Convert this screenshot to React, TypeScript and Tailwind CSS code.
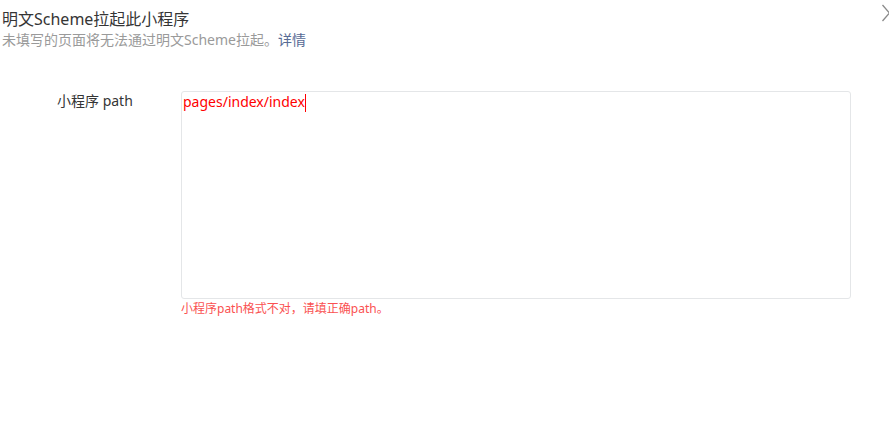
import React from "react";

export default function App() {
  const font = { fontFamily: '"Noto Sans", "Noto Sans CJK SC", sans-serif' };
  return (
    <div className="w-[889px] h-[427px] bg-white overflow-hidden" style={font}>
      <div className="flex justify-between pl-[2px] pt-[8px]">
        <div className="flex flex-col">
          <div className="text-[16px] leading-[22px] text-[#353535]">明文Scheme拉起此小程序</div>
          <div className="text-[14px] leading-[20px] text-[#9a9a9a]">
            未填写的页面将无法通过明文Scheme拉起。<span className="text-[#576b95]">详情</span>
          </div>
        </div>
        <svg width="10" height="18" viewBox="0 0 10 18" className="-mr-[2px] -mt-[4px]">
          <path d="M1.5 1 L8.5 9 L1.5 17" fill="none" stroke="#8a8a8a" strokeWidth="1.3" />
        </svg>
      </div>
      <div className="flex mt-[41px]">
        <div className="w-[181px] pl-[57px] text-[14px] leading-[20px] text-[#353535] shrink-0">小程序 path</div>
        <div className="flex flex-col">
          <div className="w-[670px] h-[208px] border border-[#e4e6e8] rounded-[3px] bg-white pl-[1px] flex items-start">
            <span className="text-[14px] leading-[20px] text-[#ff0000]">pages/index/index</span>
            <span className="block w-[1px] h-[18px] bg-[#ff0000] mt-[2px]"></span>
          </div>
          <div className="mt-[2px] text-[12px] leading-[16px] text-[#fa5151]">小程序path格式不对，请填正确path。</div>
        </div>
      </div>
    </div>
  );
}
